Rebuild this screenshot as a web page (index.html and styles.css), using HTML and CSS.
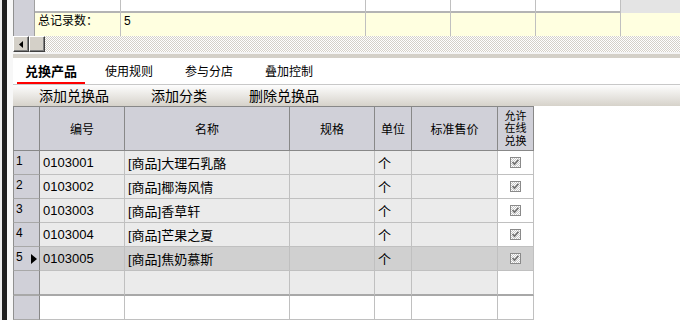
FILE: index.html
```html
<!DOCTYPE html>
<html lang="zh-CN">
<head>
<meta charset="utf-8">
<title>兑换产品</title>
<link rel="stylesheet" href="styles.css">
</head>
<body>
<div class="app">
  <div class="edge"><i class="e1"></i><i class="e2"></i><i class="e3"></i></div>
  <div class="main">
    <div class="sum">
      <div class="sum-row r1">
        <div class="rh"></div><div></div><div></div><div></div><div></div><div></div><div class="last"></div>
      </div>
      <div class="sum-row r2">
        <div class="rh"></div><div class="txt">总记录数：</div><div class="txt">5</div><div></div><div></div><div></div><div class="last"></div>
      </div>
    </div>
    <div class="hscroll">
      <div class="sbtn"><svg width="4" height="7" viewBox="0 0 4 7"><path d="M4 0 L0 3.5 L4 7 Z" fill="#000"/></svg></div>
      <div class="sbtn thumb"></div>
    </div>
    <div class="sep-light"></div>
    <div class="sep-grey"></div>
    <div class="tabs">
      <div class="tab first"><span class="tab-label active">兑换产品</span></div>
      <div class="tab"><span class="tab-label">使用规则</span></div>
      <div class="tab"><span class="tab-label">参与分店</span></div>
      <div class="tab"><span class="tab-label">叠加控制</span></div>
    </div>
    <div class="toolbar">
      <span class="tool">添加兑换品</span>
      <span class="tool">添加分类</span>
      <span class="tool">删除兑换品</span>
    </div>
    <div class="grid">
      <div class="row head">
        <div class="h rhh"></div>
        <div class="h">编号</div>
        <div class="h">名称</div>
        <div class="h">规格</div>
        <div class="h">单位</div>
        <div class="h">标准售价</div>
        <div class="h"><span class="stack"><span class="ln">允许</span><span class="ln">在线</span><span class="ln">兑换</span></span></div>
      </div>
      <div class="row">
        <div class="rh">1</div><div class="d">0103001</div><div class="d">[商品]大理石乳酪</div><div class="d"></div><div class="d">个</div><div class="d"></div>
        <div class="d cbc"><span class="cb"><svg width="9" height="9" viewBox="0 0 9 9"><path d="M1.5 4 L3.5 6.2 L7.5 1.8" fill="none" stroke="#707070" stroke-width="1.6"/></svg></span></div>
      </div>
      <div class="row">
        <div class="rh">2</div><div class="d">0103002</div><div class="d">[商品]椰海风情</div><div class="d"></div><div class="d">个</div><div class="d"></div>
        <div class="d cbc"><span class="cb"><svg width="9" height="9" viewBox="0 0 9 9"><path d="M1.5 4 L3.5 6.2 L7.5 1.8" fill="none" stroke="#707070" stroke-width="1.6"/></svg></span></div>
      </div>
      <div class="row">
        <div class="rh">3</div><div class="d">0103003</div><div class="d">[商品]香草轩</div><div class="d"></div><div class="d">个</div><div class="d"></div>
        <div class="d cbc"><span class="cb"><svg width="9" height="9" viewBox="0 0 9 9"><path d="M1.5 4 L3.5 6.2 L7.5 1.8" fill="none" stroke="#707070" stroke-width="1.6"/></svg></span></div>
      </div>
      <div class="row">
        <div class="rh">4</div><div class="d">0103004</div><div class="d">[商品]芒果之夏</div><div class="d"></div><div class="d">个</div><div class="d"></div>
        <div class="d cbc"><span class="cb"><svg width="9" height="9" viewBox="0 0 9 9"><path d="M1.5 4 L3.5 6.2 L7.5 1.8" fill="none" stroke="#707070" stroke-width="1.6"/></svg></span></div>
      </div>
      <div class="row sel">
        <div class="rh cur"><span>5</span><svg width="6" height="10" viewBox="0 0 6 10"><path d="M0 0 L6 5 L0 10 Z" fill="#000"/></svg></div>
        <div class="d">0103005</div><div class="d">[商品]焦奶慕斯</div><div class="d"></div><div class="d">个</div><div class="d"></div>
        <div class="d cbc"><span class="cb"><svg width="9" height="9" viewBox="0 0 9 9"><path d="M1.5 4 L3.5 6.2 L7.5 1.8" fill="none" stroke="#707070" stroke-width="1.6"/></svg></span></div>
      </div>
      <div class="row newrow">
        <div class="rh"></div><div class="d"></div><div class="d"></div><div class="d"></div><div class="d"></div><div class="d"></div><div class="d cbc"></div>
      </div>
      <div class="row blank">
        <div class="rh"></div><div class="d"></div><div class="d"></div><div class="d"></div><div class="d"></div><div class="d"></div><div class="d"></div>
      </div>
    </div>
  </div>
</div>
</body>
</html>
```

FILE: styles.css
```css
* { box-sizing: border-box; }
html, body { margin: 0; padding: 0; }
body {
  width: 680px;
  height: 320px;
  overflow: hidden;
  background: #fff;
  font-family: "Liberation Sans", "Noto Sans CJK SC", sans-serif;
  font-size: 12px;
  color: #000;
}
.app { display: flex; height: 320px; }
.edge { display: flex; width: 13px; flex: none; }
.edge i { display: block; height: 100%; }
.e1 { width: 2px; background: #ececec; }
.e2 { width: 5px; background: #1e1e1e; }
.e3 { width: 6px; background: #f7f7f7; }
.main { flex: 1; display: flex; flex-direction: column; min-width: 0; }

/* summary grid */
.sum-row {
  display: grid;
  grid-template-columns: 22px 86px 245px 85px 85px 85px 1fr;
}
.sum-row > div { border-right: 1px solid #c0c0c0; }
.sum-row > .last { border-right: 0; }
.sum-row .rh { background: #d0d0d8; border-right-color: #a0a0a0; }
.r1 { height: 13px; border-bottom: 2px solid #b4b4b4; background: #fff; }
.r1 .last { background: #e4e4e4; }
.r2 { height: 23px; border-bottom: 1px solid #c0c0c0; background: #ffffe0; }
.r2 > div { background: #ffffe0; }
.r2 > .rh { background: #d0d0d8; }
.r2 .txt { padding: 1px 0 0 3px; line-height: 14px; font-size: 12px; }

/* horizontal scrollbar */
.hscroll {
  height: 16px;
  display: flex;
  background: repeating-conic-gradient(#d4d0c8 0 25%, #fff 0 50%) 0 0 / 2px 2px;
}
.sbtn {
  width: 16px;
  height: 16px;
  background: #d4d0c8;
  border: 1px solid;
  border-color: #fff #404040 #404040 #fff;
  box-shadow: inset -1px -1px #808080;
  display: flex;
  align-items: center;
  justify-content: center;
}
.sbtn svg { display: block; margin-left: -1px; }
.sep-light { height: 2px; background: #f4f4f4; }
.sep-grey { height: 4px; background: #d4d0c8; }

/* tabs */
.tabs { height: 28px; display: flex; align-items: flex-end; background: #fff; }
.tab { width: 80px; display: flex; justify-content: center; }
.tab.first { width: 76px; }
.tab-label {
  display: block;
  line-height: 16px;
  font-size: 12px;
  padding: 0 8px 2px;
  border-bottom: 2px solid transparent;
}
.tab-label.active { font-weight: bold; font-size: 13px; border-bottom-color: #ff0000; }

/* toolbar */
.toolbar {
  height: 23px;
  border-top: 1px solid #c8c8c8;
  background: linear-gradient(#fdfdfd, #d6d2ca);
  display: flex;
  align-items: center;
  padding-left: 26px;
  gap: 42px;
  font-size: 14px;
  line-height: 16px;
}

/* data grid */
.grid {
  display: grid;
  grid-template-columns: 27px 85px 165px 85px 37px 86px 36px;
  width: 521px;
  border-top: 1px solid #888;
  flex: none;
}
.row { display: contents; }
.h {
  height: 44px;
  background: #d0d0d8;
  border-right: 1px solid #888;
  border-bottom: 1px solid #888;
  display: flex;
  align-items: center;
  justify-content: center;
  font-size: 12px;
}
.h.rhh { border-left: 1px solid #888; }
.stack {
  display: flex;
  flex-direction: column;
  align-items: center;
  font-size: 11px;
  line-height: 12.5px;
}
.ln { display: block; height: 12.5px; }
.d {
  height: 24px;
  background: #ebebeb;
  border-right: 1px solid #c0c0c0;
  border-bottom: 1px solid #c0c0c0;
  padding-left: 3px;
  display: flex;
  align-items: center;
  font-size: 13px;
  white-space: nowrap;
}
.rh {
  height: 24px;
  background: #d0d0d8;
  border-left: 1px solid #909090;
  border-right: 1px solid #888;
  border-bottom: 1px solid #a8a8a8;
  padding: 4px 0 0 2px;
  font-size: 12px;
  line-height: 13px;
}
.rh.cur { display: flex; justify-content: space-between; padding-right: 2px; }
.rh.cur svg { margin-top: 3px; }
.cbc { background: #fff; justify-content: center; padding: 0; }
.sel .d { background: #d0d0d0; }
.cb {
  width: 11px;
  height: 11px;
  border: 1px solid #8a8a8a;
  background: repeating-conic-gradient(#c8c8c8 0 25%, #fff 0 50%) 0 0 / 2px 2px;
  display: flex;
  margin-left: -1px;
}
.cb svg { display: block; }
.newrow .d, .newrow .rh { height: 25px; border-bottom: 2px solid #a8a8a8; }
.blank .d { background: #fff; }
```
